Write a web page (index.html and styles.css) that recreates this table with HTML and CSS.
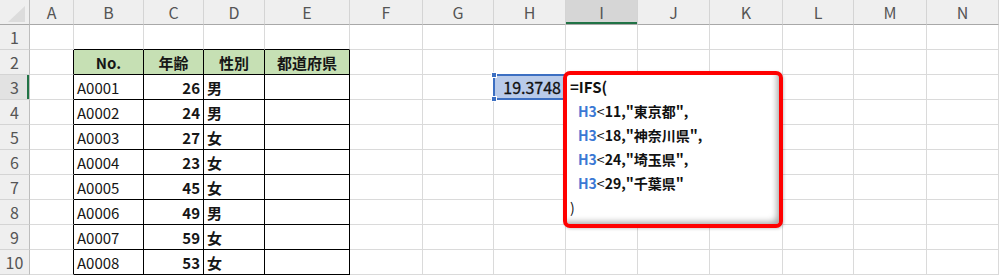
FILE: index.html
```html
<!DOCTYPE html>
<html lang="ja">
<head>
    <meta charset="UTF-8">
    <meta name="viewport" content="width=device-width, initial-scale=1.0">
    <title>IFS</title>
    <link rel="stylesheet" href="styles.css">
</head>
<body>
    <table class="sheet">
        <colgroup>
            <col style="width: 30px"><col style="width: 44px"><col style="width: 70px"><col style="width: 60px">
            <col style="width: 61px"><col style="width: 85px"><col style="width: 73px"><col style="width: 71px">
            <col style="width: 72px"><col style="width: 72px"><col style="width: 72px"><col style="width: 73px">
            <col style="width: 71px"><col style="width: 73px"><col style="width: 72px">
        </colgroup>
        <!-- column letters -->
        <tr>
            <td class="corner">
                <svg width="30" height="24" viewBox="0 0 30 24"><polygon points="25,6 25,22 8,22" fill="#dcdcdc"/></svg>
            </td>
            <td class="ch">A</td><td class="ch">B</td><td class="ch">C</td><td class="ch">D</td><td class="ch">E</td>
            <td class="ch">F</td><td class="ch">G</td><td class="ch">H</td><td class="ch on">I</td><td class="ch">J</td>
            <td class="ch">K</td><td class="ch">L</td><td class="ch">M</td><td class="ch">N</td>
        </tr>
        <tr>
            <td class="rh">1</td><td></td>
            <td class="tt"></td><td class="tt"></td><td class="tt"></td><td class="tt"></td>
            <td></td><td></td><td></td><td></td><td></td><td></td><td></td><td></td><td></td>
        </tr>
        <tr>
            <td class="rh">2</td><td class="tl"></td>
            <td class="t head">No.</td><td class="t head">年齢</td><td class="t head">性別</td><td class="t head">都道府県</td>
            <td></td><td></td><td></td><td></td><td></td><td></td><td></td><td></td><td></td>
        </tr>
        <tr>
            <td class="rh on">3</td><td class="tl"></td>
            <td class="t">A0001</td><td class="t num">26</td><td class="t sex">男</td><td class="t"></td>
            <td></td><td></td>
            <td class="active">19.3748<span class="frame"></span><span class="knob top"></span><span class="knob bottom"></span></td>
            <td></td><td></td><td></td><td></td><td></td><td></td>
        </tr>
        <tr>
            <td class="rh">4</td><td class="tl"></td>
            <td class="t">A0002</td><td class="t num">24</td><td class="t sex">男</td><td class="t"></td>
            <td></td><td></td><td></td><td></td><td></td><td></td><td></td><td></td><td></td>
        </tr>
        <tr>
            <td class="rh">5</td><td class="tl"></td>
            <td class="t">A0003</td><td class="t num">27</td><td class="t sex">女</td><td class="t"></td>
            <td></td><td></td><td></td><td></td><td></td><td></td><td></td><td></td><td></td>
        </tr>
        <tr>
            <td class="rh">6</td><td class="tl"></td>
            <td class="t">A0004</td><td class="t num">23</td><td class="t sex">女</td><td class="t"></td>
            <td></td><td></td><td></td><td></td><td></td><td></td><td></td><td></td><td></td>
        </tr>
        <tr>
            <td class="rh">7</td><td class="tl"></td>
            <td class="t">A0005</td><td class="t num">45</td><td class="t sex">女</td><td class="t"></td>
            <td></td><td></td><td></td><td></td><td></td><td></td><td></td><td></td><td></td>
        </tr>
        <tr>
            <td class="rh">8</td><td class="tl"></td>
            <td class="t">A0006</td><td class="t num">49</td><td class="t sex">男</td><td class="t"></td>
            <td></td><td></td><td></td><td></td><td></td><td></td><td></td><td></td><td></td>
        </tr>
        <tr>
            <td class="rh">9</td><td class="tl"></td>
            <td class="t">A0007</td><td class="t num">59</td><td class="t sex">女</td><td class="t"></td>
            <td></td><td></td><td></td><td></td><td></td><td></td><td></td><td></td><td></td>
        </tr>
        <tr>
            <td class="rh">10</td><td class="tl"></td>
            <td class="t">A0008</td><td class="t num">53</td><td class="t sex">女</td><td class="t"></td>
            <td></td><td></td><td></td><td></td><td></td><td></td><td></td><td></td><td></td>
        </tr>
    </table>

    <!-- formula being edited in I3 -->
    <div class="formula">
        <div>=IFS(</div>
        <div class="ind"><span class="ref">H3</span><span class="op">&lt;</span>11,"東京都",</div>
        <div class="ind"><span class="ref">H3</span><span class="op">&lt;</span>18,"神奈川県",</div>
        <div class="ind"><span class="ref">H3</span><span class="op">&lt;</span>24,"埼玉県",</div>
        <div class="ind"><span class="ref">H3</span><span class="op">&lt;</span>29,"千葉県"</div>
        <div class="op">)</div>
    </div>
</body>
</html>
```

FILE: styles.css
```css
* {
    margin: 0;
    padding: 0;
    box-sizing: border-box;
}
body {
    background-color: #fff;
    font-family: "Noto Sans CJK JP", "Noto Sans", sans-serif;
    overflow: hidden;
}

/* GRID */
.sheet {
    border-collapse: separate;
    border-spacing: 0;
    table-layout: fixed;
    width: 999px;
}
.sheet td {
    height: 25px;
    padding: 0 3px;
    border-right: 1px solid #dadada;
    border-bottom: 1px solid #dadada;
    font-size: 15px;
    line-height: 23px;
    color: #161616;
    white-space: nowrap;
    overflow: hidden;
}

/* headers */
.sheet .corner {
    padding: 0;
    background-color: #efefef;
    border-right: 1px solid #bdbdbd;
    border-bottom: 1px solid #a8a8a8;
}
.sheet .corner svg {
    display: block;
}
.sheet .ch {
    background-color: #efefef;
    border-right: 1px solid #d4d4d4;
    border-bottom: 1px solid #a8a8a8;
    text-align: center;
    color: #555;
    font-size: 16px;
}
.sheet .ch.on {
    background-color: #d6d6d6;
    box-shadow: inset 0 -2px 0 #217346;
}
.sheet .rh {
    background-color: #efefef;
    border-right: 1px solid #bdbdbd;
    border-bottom: 1px solid #d4d4d4;
    text-align: center;
    color: #555;
    font-size: 16px;
    padding: 0;
}
.sheet .rh.on {
    background-color: #e2e2e2;
    box-shadow: inset -2px 0 0 #217346;
}

/* bordered table B2:E10 */
.sheet .t {
    border-right-color: #000;
    border-bottom-color: #000;
}
.sheet .tl {
    border-right-color: #000;
}
.sheet .tt {
    border-bottom-color: #000;
}
.sheet .head {
    background-color: #c6e0b4;
    text-align: center;
    font-weight: bold;
}
.sheet .num {
    text-align: right;
    font-weight: bold;
}
.sheet .sex {
    font-weight: bold;
}

/* selected cell H3 */
.sheet .active {
    position: relative;
    overflow: visible;
    background-color: #b9cbea;
    text-align: right;
    padding-right: 4px;
    font-size: 16px;
    color: #111;
    -webkit-text-stroke: 0.3px #111;
}
.active .frame {
    position: absolute;
    top: -1px;
    left: -1px;
    right: -1px;
    bottom: -1px;
    border: 2px solid #3c6fc2;
}
.active .knob {
    position: absolute;
    left: -3px;
    width: 6px;
    height: 6px;
    background-color: #3c6fc2;
    border: 1px solid #fff;
}
.active .knob.top {
    top: -3px;
}
.active .knob.bottom {
    bottom: -3px;
}

/* FORMULA POPUP */
.formula {
    position: absolute;
    left: 563px;
    top: 71px;
    width: 220px;
    height: 157px;
    padding-left: 3px;
    background-color: #fff;
    border: 4px solid #f00;
    border-radius: 7px;
    box-shadow: inset -5px -5px 6px -3px rgba(0, 0, 0, 0.35), 1px 1px 3px rgba(0, 0, 0, 0.2);
    font-size: 14px;
    line-height: 24px;
    font-weight: bold;
    color: #111;
}
.formula div:first-child {
    font-size: 15px;
}
.formula .ind {
    padding-left: 8px;
}
.formula .ref {
    color: #3b78d4;
}
.formula .op {
    font-weight: normal;
}
```
